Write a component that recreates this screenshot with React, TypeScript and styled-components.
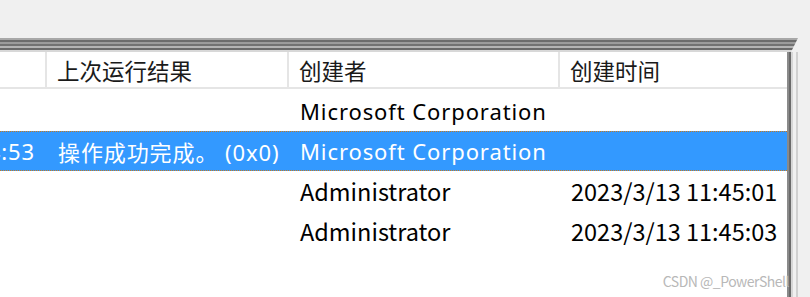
import styled, { createGlobalStyle } from "styled-components";

const GlobalStyle = createGlobalStyle`
  html, body {
    margin: 0;
    padding: 0;
    background: #f0f0f0;
    overflow: hidden;
  }
`;

interface Row {
  lastRun: string;
  result: string;
  author: string;
  created: string;
  selected?: boolean;
  narrow?: boolean;
}

const rows: Row[] = [
  { lastRun: "", result: "", author: "Microsoft Corporation", created: "" },
  { lastRun: "2023/3/13 11:44:53", result: "操作成功完成。 (0x0)", author: "Microsoft Corporation", created: "", selected: true },
  { lastRun: "", result: "", author: "Administrator", created: "2023/3/13 11:45:01", narrow: true },
  { lastRun: "", result: "", author: "Administrator", created: "2023/3/13 11:45:03", narrow: true },
];

// column widths, the left-most column is cut off by the screenshot
const cols = [47, 242, 271, 227];

const Page = styled.div`
  position: relative;
  width: 810px;
  height: 297px;
  padding-top: 38px;
  box-sizing: border-box;
  font-family: "Noto Sans", "Noto Sans CJK SC", sans-serif;
`;

const Frame = styled.div`
  display: flex;
  flex-direction: column;
  width: 798px;
  height: 259px;
`;

const TopEdge = styled.div`
  height: 14px;
  width: 798px;
  background: linear-gradient(
    to bottom,
    #a8a8a8 0 2px,
    #6c6c6c 2px 4px,
    #9c9c9c 4px 6px,
    #727272 6px 8px,
    #b4b4b4 8px 10px,
    #6a6a6a 10px 12px,
    #d8d8d8 12px 14px
  );
  clip-path: polygon(0 0, 798px 0, 791px 14px, 0 14px);
`;

const Body = styled.div`
  flex: 1;
  display: flex;
`;

const List = styled.div`
  width: 787px;
  background: #ffffff;
  display: flex;
  flex-direction: column;
`;

const SideEdge = styled.div`
  width: 11px;
  background: linear-gradient(
    to right,
    #8a8a8a 0 2px,
    #6a6a6a 2px 4px,
    #d6d6d6 4px 6px,
    #f4f4f4 6px 9px,
    #c8c8c8 9px 11px
  );
`;

const FarEdge = styled.div`
  flex: 1;
  border-left: 2px solid #d0d0d0;
  margin-left: 3px;
`;

const Header = styled.div`
  display: flex;
  height: 37px;
  box-sizing: border-box;
  border-bottom: 2px solid #e5e5e5;
  font-family: "Noto Sans CJK SC", sans-serif;
  font-size: 22.5px;
  color: #1a1a1a;
`;

const HeaderCell = styled.div<{ $w: number }>`
  width: ${(p) => p.$w}px;
  box-sizing: border-box;
  display: flex;
  align-items: center;
  padding-left: 10px;
  border-right: 2px solid #e5e5e5;
  white-space: nowrap;
  &:last-child {
    border-right: none;
  }
`;

const Rows = styled.div`
  padding-top: 2px;
  display: flex;
  flex-direction: column;
`;

const ListRow = styled.div<{ $selected?: boolean; $narrow?: boolean }>`
  display: flex;
  height: 40px;
  box-sizing: border-box;
  background: ${(p) => (p.$selected ? "#3399ff" : "transparent")};
  color: ${(p) => (p.$selected ? "#ffffff" : "#000000")};
  border-top: 1px dotted ${(p) => (p.$selected ? "#c87a1e" : "transparent")};
  border-bottom: 1px dotted ${(p) => (p.$selected ? "#c87a1e" : "transparent")};
  font-family: ${(p) =>
    p.$narrow
      ? `"Noto Sans CJK SC", sans-serif`
      : `"Noto Sans", "Noto Sans CJK SC", sans-serif`};
  font-size: ${(p) => (p.$narrow ? "23.5px" : "22px")};
  letter-spacing: ${(p) => (p.$narrow ? "0" : "0.9px")};
`;

const Cell = styled.div<{ $w: number }>`
  width: ${(p) => p.$w}px;
  flex-shrink: 0;
  box-sizing: border-box;
  display: flex;
  align-items: center;
  padding-left: 11px;
  white-space: nowrap;
  overflow: hidden;
`;

const CutCell = styled(Cell)`
  padding-left: 0;
  justify-content: flex-end;
  padding-right: 12px;
`;

const Watermark = styled.div`
  position: absolute;
  right: 21px;
  bottom: 6px;
  font-family: "Noto Sans CJK SC", sans-serif;
  font-size: 14px;
  color: #b8b8b8;
  letter-spacing: -0.5px;
`;

export default function App() {
  return (
    <>
      <GlobalStyle />
      <Page>
        <Frame>
          <TopEdge />
          <Body>
            <List>
              <Header>
                <HeaderCell $w={cols[0]} />
                <HeaderCell $w={cols[1]}>上次运行结果</HeaderCell>
                <HeaderCell $w={cols[2]}>创建者</HeaderCell>
                <HeaderCell $w={cols[3]}>创建时间</HeaderCell>
              </Header>
              <Rows>
                {rows.map((r, i) => (
                  <ListRow key={i} $selected={r.selected} $narrow={r.narrow}>
                    <CutCell $w={cols[0]}>{r.lastRun}</CutCell>
                    <Cell $w={cols[1]}>{r.result}</Cell>
                    <Cell $w={cols[2]}>{r.author}</Cell>
                    <Cell $w={cols[3]}>{r.created}</Cell>
                  </ListRow>
                ))}
              </Rows>
            </List>
            <SideEdge />
            <FarEdge />
          </Body>
        </Frame>
        <Watermark>CSDN @_PowerShell</Watermark>
      </Page>
    </>
  );
}
